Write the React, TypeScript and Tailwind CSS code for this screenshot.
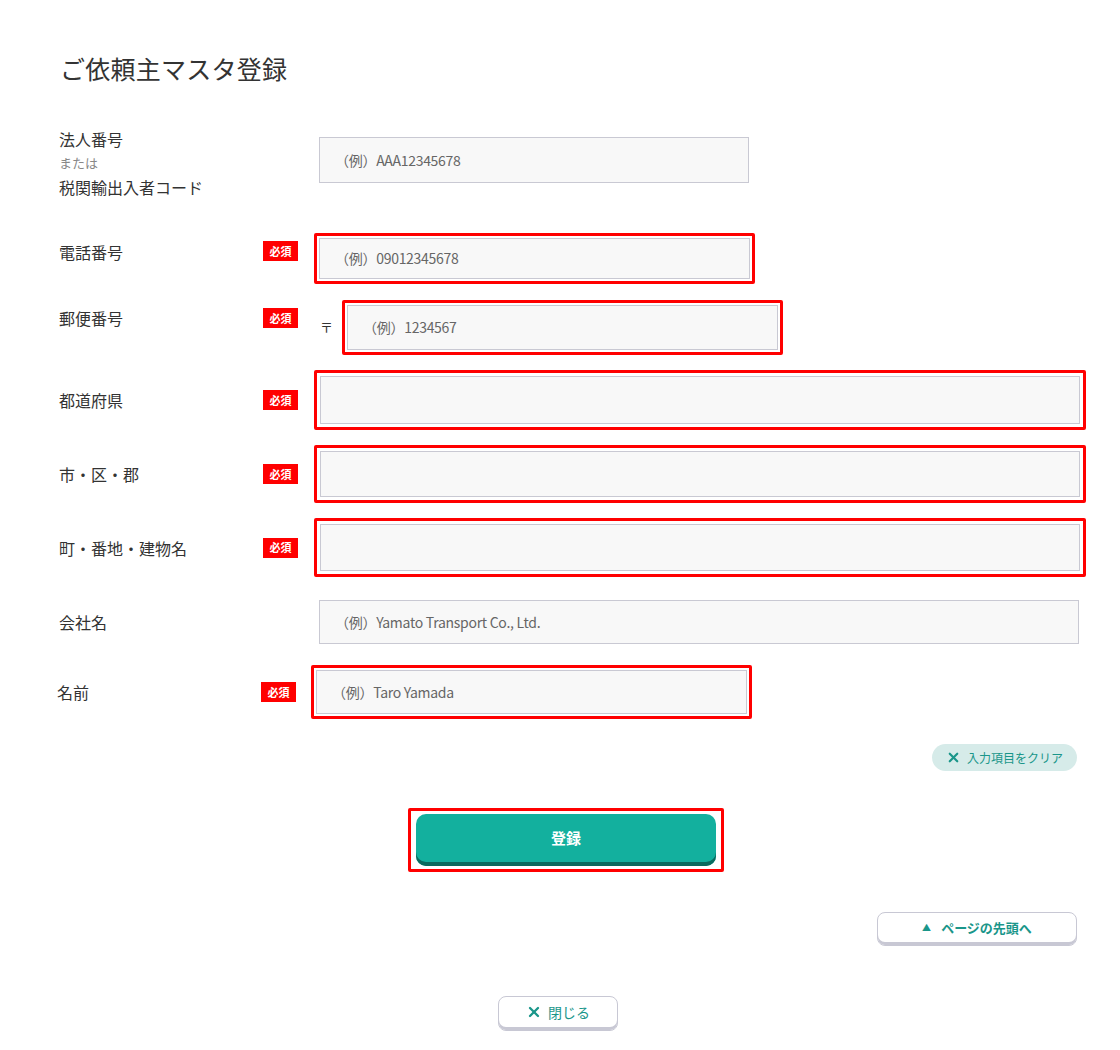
import { X } from "lucide-react";

const FONT = "font-['Noto_Sans_CJK_JP','Noto_Sans',sans-serif]";

function Badge() {
  return (
    <span className="flex h-[20px] w-[35px] items-center justify-center bg-[#ff0000] text-[11px] font-bold leading-none text-white">
      必須
    </span>
  );
}

function Field({ w, h, placeholder }: { w: string; h: string; placeholder?: string }) {
  return (
    <div className={`${w} ${h} flex items-center border border-[#c9c9d3] bg-[#f8f8f8] pl-[15px] text-[14px] tracking-[-0.02em] text-[#666]`}>
      {placeholder}
    </div>
  );
}

function RedBox({ children, pad = "p-[2px]" }: { children: React.ReactNode; pad?: string }) {
  return <div className={`rounded-[2px] border-[3px] border-[#ff0000] bg-white ${pad}`}>{children}</div>;
}

export default function App() {
  return (
    <div className={`${FONT} min-h-[1050px] bg-white pl-[59px] pr-[41px] pt-[50px] text-[#333]`}>
      <h1 className="ml-[1px] text-[25px] leading-[36px] tracking-[0.01em] text-[#333]">ご依頼主マスタ登録</h1>

      {/* 法人番号 */}
      <div className="mt-[41px] flex items-start">
        <div className="w-[255px] text-[16px] leading-[24px]">
          <div>法人番号</div>
          <div className="text-[13px] text-[#888]">または</div>
          <div>税関輸出入者コード</div>
        </div>
        <div className="mt-[10px] ml-[5px]">
          <Field w="w-[430px]" h="h-[46px]" placeholder="（例）AAA12345678" />
        </div>
      </div>

      {/* 電話番号 */}
      <div className="mt-[34px] flex items-start">
        <div className="mt-[7px] w-[204px] text-[16px] leading-[24px]">電話番号</div>
        <div className="mt-[8px] flex w-[51px]"><Badge /></div>
        <RedBox>
          <Field w="w-[431px]" h="h-[41px]" placeholder="（例）09012345678" />
        </RedBox>
      </div>

      {/* 郵便番号 */}
      <div className="mt-[16px] flex items-start">
        <div className="mt-[6px] w-[204px] text-[16px] leading-[24px]">郵便番号</div>
        <div className="mt-[8px] flex w-[51px]"><Badge /></div>
        <div className="ml-[6px] mt-[18px] w-[22px] text-[13px] leading-[18px]">〒</div>
        <RedBox>
          <Field w="w-[431px]" h="h-[45px]" placeholder="（例）1234567" />
        </RedBox>
      </div>

      {/* 都道府県 */}
      <div className="-mr-[7px] mt-[15px] flex items-center">
        <div className="w-[204px] text-[16px] leading-[24px]">都道府県</div>
        <div className="flex w-[51px]"><Badge /></div>
        <div className="flex-1">
          <RedBox pad="p-[3px]">
            <Field w="w-full" h="h-[48px]" />
          </RedBox>
        </div>
      </div>

      {/* 市・区・郡 */}
      <div className="-mr-[7px] mt-[15px] flex items-center">
        <div className="w-[204px] text-[16px] leading-[24px]">市・区・郡</div>
        <div className="flex w-[51px]"><Badge /></div>
        <div className="flex-1">
          <RedBox pad="p-[3px]">
            <Field w="w-full" h="h-[46px]" />
          </RedBox>
        </div>
      </div>

      {/* 町・番地・建物名 */}
      <div className="-mr-[7px] mt-[15px] flex items-center">
        <div className="w-[204px] text-[16px] leading-[24px]">町・番地・建物名</div>
        <div className="flex w-[51px]"><Badge /></div>
        <div className="flex-1">
          <RedBox pad="p-[3px]">
            <Field w="w-full" h="h-[47px]" />
          </RedBox>
        </div>
      </div>

      {/* 会社名 */}
      <div className="mt-[23px] flex items-center">
        <div className="w-[260px] text-[16px] leading-[24px]">会社名</div>
        <div className="flex-1">
          <Field w="w-full" h="h-[44px]" placeholder="（例）Yamato Transport Co., Ltd." />
        </div>
      </div>

      {/* 名前 */}
      <div className="-ml-[2px] mt-[21px] flex items-center">
        <div className="w-[204px] text-[16px] leading-[24px]">名前</div>
        <div className="flex w-[50px]"><Badge /></div>
        <RedBox>
          <Field w="w-[431px]" h="h-[44px]" placeholder="（例）Taro Yamada" />
        </RedBox>
      </div>

      <div className="mr-[2px] mt-[25px] flex justify-end">
        <button className="flex h-[27px] w-[145px] items-center justify-center gap-[6px] rounded-full bg-[#d6ebe9] text-[12px] text-[#1a968a]">
          <X size={15} strokeWidth={3.5} />
          入力項目をクリア
        </button>
      </div>

      <div className="mt-[37px] flex justify-center pr-[6px]">
        <div className="rounded-[2px] border-[3px] border-[#ff0000] px-[5px] pb-[3px] pt-[3px]">
          <button className="h-[52px] w-[300px] rounded-[10px] bg-[#13b09e] pb-[4px] text-[15px] font-bold text-white shadow-[inset_0_-4px_0_#0a6a5e]">
            登録
          </button>
        </div>
      </div>

      <div className="mr-[2px] mt-[40px] flex justify-end">
        <button className="flex h-[34px] w-[200px] items-center justify-center gap-[10px] rounded-[8px] border border-[#c8c8d4] bg-white pb-[3px] text-[13px] font-bold text-[#1a968a] shadow-[inset_0_-3px_0_#c8c8d4]">
          <span className="text-[9px]">▲</span>
          ページの先頭へ
        </button>
      </div>

      <div className="-ml-[59px] mr-[-41px] mt-[50px] flex justify-center pr-[4px]">
        <button className="flex h-[35px] w-[120px] items-center justify-center gap-[6px] rounded-[8px] border border-[#c8c8d4] bg-white pb-[3px] text-[14px] text-[#1a968a] shadow-[inset_0_-3px_0_#c8c8d4]">
          <X size={16} strokeWidth={3.5} />
          閉じる
        </button>
      </div>
    </div>
  );
}
